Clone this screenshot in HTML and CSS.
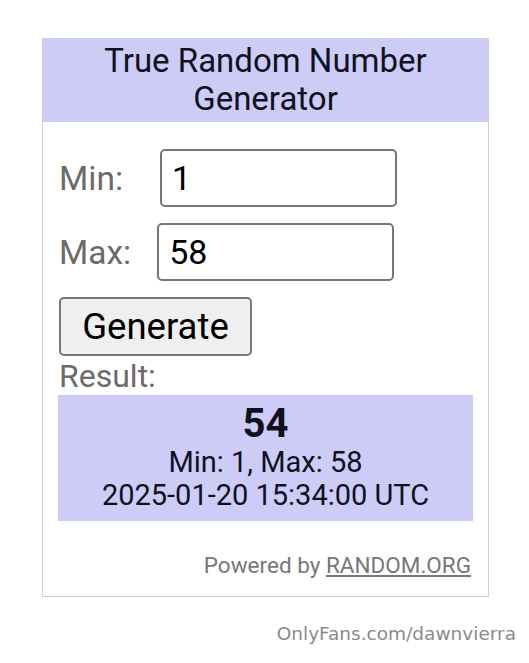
FILE: index.html
```html
<!DOCTYPE html>
<html lang="en">
<head>
    <meta charset="UTF-8">
    <meta name="viewport" content="width=device-width, initial-scale=1.0">
    <title>True Random Number Generator</title>
    <link rel="stylesheet" href="styles.css">
</head>
<body>
    <div class="widget">
        <div class="widget-title">True Random Number Generator</div>
        <div class="widget-body">
            <div class="field-row">
                <label for="min" class="field-label">Min:</label>
                <input type="text" id="min" class="field-input min-input" value="1">
            </div>
            <div class="field-row">
                <label for="max" class="field-label">Max:</label>
                <input type="text" id="max" class="field-input max-input" value="58">
            </div>
            <button class="generate-btn">Generate</button>
            <div class="result-label">Result:</div>
            <div class="result-box">
                <div class="result-number">54</div>
                <div class="result-line">Min: 1, Max: 58</div>
                <div class="result-line">2025-01-20 15:34:00 UTC</div>
            </div>
            <div class="powered">Powered by <a href="#" class="powered-link">RANDOM.ORG</a></div>
        </div>
    </div>
    <div class="watermark">OnlyFans.com/dawnvierra</div>
</body>
</html>
```

FILE: styles.css
```css
body {
    margin: 0;
    background-color: #ffffff;
    font-family: Roboto, "Liberation Sans", sans-serif;
}
.widget {
    margin: 38px 0 0 42px;
    width: 445px;
    border: 1px solid #cfd0d8; /* Light border */
}
.widget-title {
    background-color: #ccccf7; /* Lavender header */
    color: #111122;
    font-size: 33px;
    line-height: 38px;
    text-align: center;
    padding: 3px 10px 4px;
}
.widget-body {
    padding: 27px 15px 18px;
}
.field-row {
    display: flex;
    align-items: center;
    margin-bottom: 16px;
}
.field-label {
    font-size: 33.5px;
    color: #6b6b6b;
    padding-left: 1px;
}
.field-input {
    box-sizing: border-box;
    width: 237px;
    height: 58px;
    border: 2px solid #777777;
    border-radius: 5px;
    font-family: Roboto, "Liberation Sans", sans-serif;
    font-size: 34px;
    color: #000000;
    padding: 0 10px;
}
.min-input {
    margin-left: 37px;
}
.max-input {
    margin-left: 26px;
}
.generate-btn {
    box-sizing: border-box;
    width: 193px;
    height: 59px;
    margin-left: 1px;
    background-color: #efefef;
    border: 2px solid #777777;
    border-radius: 5px;
    font-family: Roboto, "Liberation Sans", sans-serif;
    font-size: 36.5px;
    color: #000000;
    padding: 0;
}
.result-label {
    font-size: 32px;
    line-height: 36px;
    color: #6b6b6b;
    padding-left: 1px;
    margin-top: 2px;
}
.result-box {
    background-color: #ccccf7;
    color: #111122;
    text-align: center;
    padding: 7px 0 9px;
    margin-top: 1px;
}
.result-number {
    font-size: 40px;
    font-weight: bold;
    line-height: 44px;
}
.result-line {
    font-size: 29px;
    line-height: 33px;
}
.powered {
    text-align: right;
    font-size: 22.5px;
    color: #777777;
    margin-top: 31px;
    padding-right: 2px;
}
.powered-link {
    color: #777777;
}
.watermark {
    text-align: right;
    font-family: "DejaVu Sans", sans-serif;
    font-size: 18.5px;
    color: #8a8a8a;
    margin-top: 26px;
    padding-right: 13px;
}
```
